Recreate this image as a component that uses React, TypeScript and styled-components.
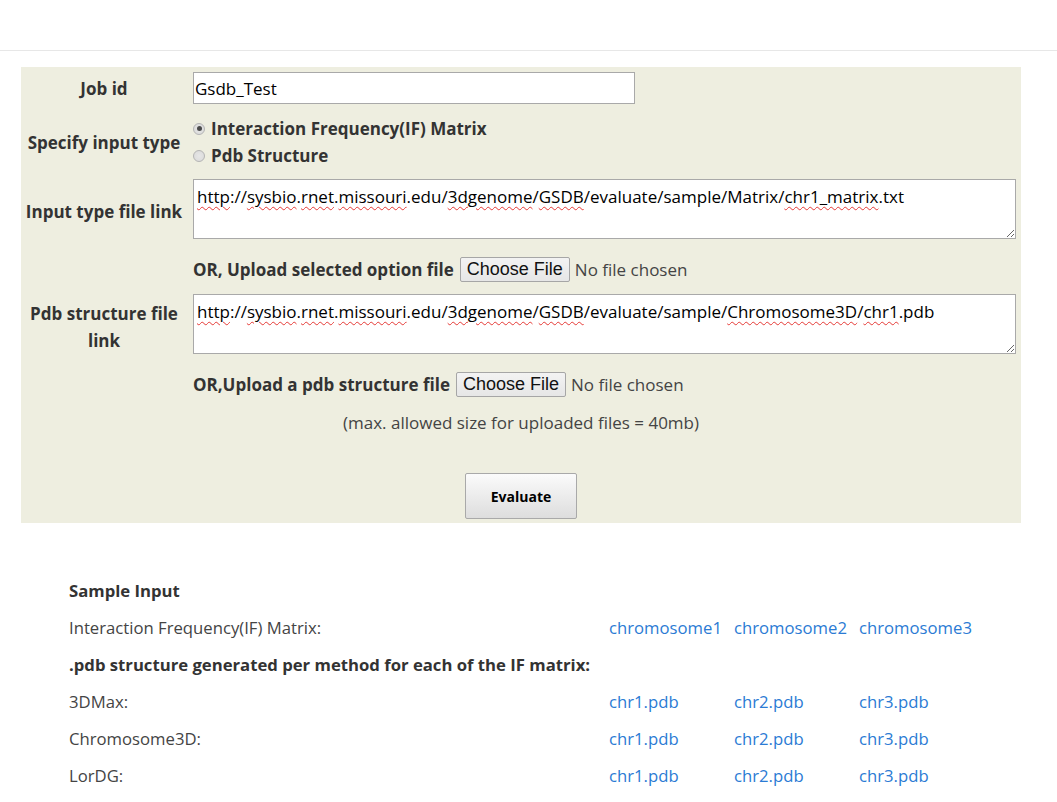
import React from "react";
import styled, { createGlobalStyle } from "styled-components";

const FONT = `"Open Sans", "Noto Sans", sans-serif`;

const GlobalStyle = createGlobalStyle`
  html, body { margin: 0; padding: 0; background: #ffffff; }
  body { font-family: ${FONT}; font-size: 17px; color: #333333; }
  * { box-sizing: border-box; }
`;

const Header = styled.header`
  height: 51px;
  border-bottom: 1px solid #e7e7e7;
  background: #fff;
`;

const Panel = styled.form`
  margin: 16px 0 0 21px;
  width: 1000px;
  background: #eeeee0;
  padding: 5px 0 4px 0;
  display: flex;
  flex-direction: column;
`;

const Row = styled.div<{ $mt?: number }>`
  display: grid;
  grid-template-columns: 166px 1fr;
  column-gap: 6px;
  align-items: center;
  padding-right: 5px;
  margin-top: ${(p) => p.$mt ?? 0}px;
`;

const CenterRow = styled.div<{ $mt?: number }>`
  display: flex;
  justify-content: center;
  margin-top: ${(p) => p.$mt ?? 0}px;
  line-height: 27px;
  color: #444;
`;

const Label = styled.label<{ $drop?: number }>`
  font-weight: 700;
  text-align: center;
  line-height: 27px;
  color: #333;
  padding-top: ${(p) => p.$drop ?? 0}px;
`;

const TextInput = styled.input`
  width: 442px;
  height: 32px;
  border: 1px solid #a9a9a9;
  padding: 0 1px;
  font-family: ${FONT};
  font-size: 17px;
  color: #000;
  background: #fff;
  outline: none;
`;

const RadioGroup = styled.div`
  display: flex;
  flex-direction: column;
`;

const RadioLine = styled.label`
  display: flex;
  align-items: center;
  gap: 6px;
  font-weight: 700;
  line-height: 27px;
  color: #333;
`;

const Radio = styled.input`
  appearance: none;
  margin: 0;
  width: 12px;
  height: 12px;
  border-radius: 50%;
  border: 1px solid #b4b4b4;
  background: radial-gradient(circle, #e6e6e6 0%, #d9d9d9 100%);
  position: relative;
  &:checked::after {
    content: "";
    position: absolute;
    left: 2.5px;
    top: 2.5px;
    width: 5px;
    height: 5px;
    border-radius: 50%;
    background: #4a4a4a;
  }
`;

const LinkBox = styled.div`
  height: 60px;
  border: 1px solid #a9a9a9;
  background: #fff;
  padding: 6px 3px 0;
  font-size: 17px;
  line-height: 22px;
  color: #000;
  resize: vertical;
  overflow: auto;
  white-space: nowrap;
`;

const Typo = styled.span`
  text-decoration: underline wavy #e53935;
  text-decoration-thickness: 1px;
  text-underline-offset: 3px;
`;

const UploadLine = styled.div`
  display: flex;
  align-items: center;
  gap: 5px;
  line-height: 27px;
`;

const UploadText = styled.span`
  font-weight: 700;
  color: #333;
  margin-right: 1px;
`;

const FileButton = styled.button`
  font-family: "Liberation Sans", Arial, sans-serif;
  font-size: 18px;
  height: 25px;
  padding: 0 6px;
  border: 1px solid #a6a6a6;
  border-radius: 2px;
  background: linear-gradient(#f3f3f3, #e6e6e6);
  color: #111;
  line-height: 23px;
`;

const NoFile = styled.span`
  color: #444;
`;

const EvaluateButton = styled.button`
  width: 112px;
  height: 46px;
  border: 1px solid #a9a9a9;
  border-radius: 2px;
  background: linear-gradient(#fbfbfb, #dddddd);
  font-family: ${FONT};
  font-weight: 700;
  font-size: 14px;
  color: #000;
`;

const Samples = styled.section`
  margin: 49px 0 0 69px;
  display: grid;
  grid-template-columns: 540px 125px 125px 125px;
  grid-auto-rows: 37px;
  align-items: center;
  font-size: 16.7px;
`;

const SampleHead = styled.div`
  grid-column: 1 / -1;
  font-weight: 700;
  color: #333;
`;

const SampleLabel = styled.div`
  color: #444;
`;

const SampleLink = styled.a`
  color: #2b7bd4;
  text-decoration: none;
`;

const URL1 = (
  <>
    <Typo>http</Typo>://<Typo>sysbio</Typo>.<Typo>rnet</Typo>.<Typo>missouri</Typo>.edu/<Typo>3dgenome</Typo>/<Typo>GSDB</Typo>/evaluate/sample/Matrix/<Typo>chr1_matrix</Typo>.txt
  </>
);

const URL2 = (
  <>
    <Typo>http</Typo>://<Typo>sysbio</Typo>.<Typo>rnet</Typo>.<Typo>missouri</Typo>.edu/<Typo>3dgenome</Typo>/<Typo>GSDB</Typo>/evaluate/sample/<Typo>Chromosome3D</Typo>/<Typo>chr1</Typo>.pdb
  </>
);

const pdbRows = ["3DMax:", "Chromosome3D:", "LorDG:"];

export default function App() {
  return (
    <>
      <GlobalStyle />
      <Header />
      <Panel onSubmit={(e) => e.preventDefault()}>
        <Row>
          <Label>Job id</Label>
          <TextInput defaultValue="Gsdb_Test" />
        </Row>
        <Row $mt={11}>
          <Label>Specify input type</Label>
          <RadioGroup>
            <RadioLine>
              <Radio type="radio" name="itype" defaultChecked />
              Interaction Frequency(IF) Matrix
            </RadioLine>
            <RadioLine>
              <Radio type="radio" name="itype" />
              Pdb Structure
            </RadioLine>
          </RadioGroup>
        </Row>
        <Row $mt={10}>
          <Label $drop={5}>Input type file link</Label>
          <LinkBox>{URL1}</LinkBox>
        </Row>
        <Row $mt={17}>
          <span />
          <UploadLine>
            <UploadText>OR, Upload selected option file</UploadText>
            <FileButton type="button">Choose File</FileButton>
            <NoFile>No file chosen</NoFile>
          </UploadLine>
        </Row>
        <Row $mt={11}>
          <Label $drop={5}>
            Pdb structure file
            <br />
            link
          </Label>
          <LinkBox>{URL2}</LinkBox>
        </Row>
        <Row $mt={17}>
          <span />
          <UploadLine>
            <UploadText>OR,Upload a pdb structure file</UploadText>
            <FileButton type="button">Choose File</FileButton>
            <NoFile>No file chosen</NoFile>
          </UploadLine>
        </Row>
        <CenterRow $mt={11}>(max. allowed size for uploaded files = 40mb)</CenterRow>
        <CenterRow $mt={37}>
          <EvaluateButton type="submit">Evaluate</EvaluateButton>
        </CenterRow>
      </Panel>
      <Samples>
        <SampleHead>Sample Input</SampleHead>
        <SampleLabel>Interaction Frequency(IF) Matrix:</SampleLabel>
        <SampleLink href="#">chromosome1</SampleLink>
        <SampleLink href="#">chromosome2</SampleLink>
        <SampleLink href="#">chromosome3</SampleLink>
        <SampleHead>.pdb structure generated per method for each of the IF matrix:</SampleHead>
        {pdbRows.map((r) => (
          <React.Fragment key={r}>
            <SampleLabel>{r}</SampleLabel>
            <SampleLink href="#">chr1.pdb</SampleLink>
            <SampleLink href="#">chr2.pdb</SampleLink>
            <SampleLink href="#">chr3.pdb</SampleLink>
          </React.Fragment>
        ))}
      </Samples>
    </>
  );
}
